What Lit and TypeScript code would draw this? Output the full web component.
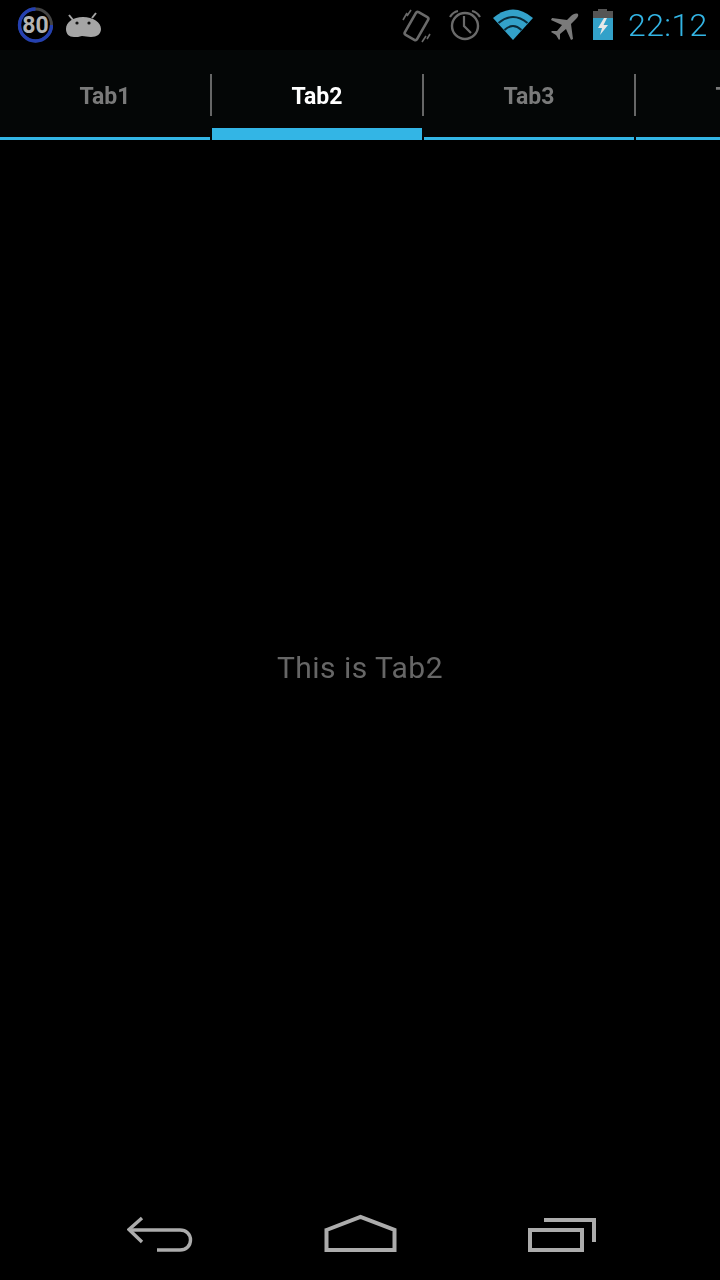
import { LitElement, html, css } from "lit";
import { customElement } from "lit/decorators.js";

const tabs = ["Tab1", "Tab2", "Tab3", "Tab4"];

@customElement("app-root")
export class AppRoot extends LitElement {
  static styles = css`
    :host { display: flex; flex-direction: column; width: 720px; height: 1280px; background: #000; font-family: Roboto, sans-serif; overflow: hidden; }
    .status { height: 50px; display: flex; align-items: flex-start; flex: none; }
    .status svg { display: block; flex: none; }
    .left { display: flex; padding: 7px 0 0 17px; gap: 12px; }
    .android { margin-top: 3px; }
    .right { margin-left: auto; display: flex; padding-top: 7px; }
    .vib { margin-top: 1px; }
    .alarm { margin-left: 13px; }
    .wifi { margin-left: 10px; }
    .plane { margin-left: 16px; }
    .battery { margin-left: 13px; }
    .time { color: #33b5e5; font-size: 32px; font-weight: 300; line-height: 36px; margin-left: 11px; margin-right: 12px; letter-spacing: 0.4px; will-change: transform; }
    .tabs { height: 90px; flex: none; background: #040606; display: flex; overflow: hidden; }
    .tab { flex: none; width: 210px; margin-right: 2px; position: relative; display: flex; flex-direction: column; }
    .label { flex: 1; display: flex; align-items: center; justify-content: center; font-size: 23px; font-weight: 700; color: #7a7a7a; padding-top: 6px; will-change: transform; }
    .active .label { color: #fff; margin-bottom: -9px; }
    .line { height: 3px; background: #33b5e5; flex: none; }
    .active .line { height: 12px; }
    .divider { position: absolute; right: -2px; top: 24px; width: 2px; height: 42px; background: #666; }
    .body { flex: 1; display: flex; align-items: center; justify-content: center; color: #666; font-size: 30px; padding-top: 10px; letter-spacing: 0.45px; will-change: transform; }
    .nav { height: 96px; flex: none; display: flex; align-items: flex-start; padding: 27px 124px 0 127px; box-sizing: border-box; justify-content: space-between; }
    .nav svg { display: block; }
  `;

  render() {
    return html`
      <div class="status">
        <div class="left">
          <svg width="36" height="36" viewBox="0 0 36 36" fill="none">
            <circle cx="18.5" cy="18" r="16" stroke="#444" stroke-width="3"></circle>
            <path d="M18.5 2 A16 16 0 1 0 34.5 18" stroke="#2440b0" stroke-width="3.4"></path>
            <text x="18.5" y="25.5" text-anchor="middle" font-family="Roboto" font-size="23" font-weight="700" fill="#b4b4b4">80</text>
          </svg>
          <svg class="android" width="37" height="28" viewBox="0 0 37 28">
            <path d="M4 5 L8 10 M31 3 L27 8" stroke="#a5a5a5" stroke-width="2"></path>
            <path d="M1 19 C1 12 8 7 18 7 C28 7 36 12 36 19 C36 24 32 27 26 27 C22 27 20 26 17 26 C14 27 12 27 9 27 C4 27 1 24 1 19 Z" fill="#a5a5a5"></path>
            <circle cx="12" cy="13" r="1.6" fill="#111"></circle>
            <circle cx="24" cy="13" r="1.6" fill="#111"></circle>
          </svg>
        </div>
        <div class="right">
          <svg class="vib" width="34" height="36" viewBox="0 0 34 36" fill="none" stroke="#6a6a6a">
            <rect x="8.5" y="5" width="14" height="26" rx="2" transform="rotate(30 15.5 18)" stroke-width="2.6"></rect>
            <path d="M6 5 L2 12 M10 2 L6 8 M25 28 L21 34 M29 26 L26 31" stroke-width="1.6"></path>
          </svg>
          <svg class="alarm" width="34" height="36" viewBox="0 0 34 36" fill="none" stroke="#6a6a6a">
            <circle cx="17" cy="19" r="13" stroke-width="2.4"></circle>
            <path d="M16 9 V19 L23 26" stroke-width="2.2"></path>
            <path d="M2 10 Q5 5 10 4 M24 4 Q29 5 32 10" stroke-width="2.2"></path>
          </svg>
          <svg class="wifi" width="42" height="36" viewBox="0 0 42 36">
            <path d="M1 11 Q21 -6 41 11 L21 33 Z" fill="#33a1c9"></path>
            <path d="M6.5 16 Q21 4 35.5 16 M12.5 23 Q21 15 29.5 23" fill="none" stroke="#0a2a38" stroke-width="2"></path>
          </svg>
          <svg class="plane" width="30" height="36" viewBox="0 0 30 36">
            <path d="M28 7 C26 6 23 7 21 9 L17 13 L2 11 L1 13 L12 18 L7 24 L2 24 L1 25 L6 28 L9 33 L10 32 L10 27 L16 22 L21 33 L23 32 L21 17 L25 13 C27 11 29 9 28 7 Z" fill="#7a7a7a"></path>
          </svg>
          <svg class="battery" width="24" height="36" viewBox="0 0 24 36">
            <path d="M5 2 H14 V4 H20 V11 H0 V4 H5 Z" fill="#555"></path>
            <rect x="0" y="11" width="20" height="22" fill="#33a1c9"></rect>
            <path d="M11 11 L5 21 H9 L7 28 L15 18 H10.5 L14 11 Z" fill="#e8e8e8"></path>
          </svg>
          <div class="time">22:12</div>
        </div>
      </div>
      <div class="tabs">
        ${tabs.map((t, i) => html`
          <div class="tab ${i === 1 ? "active" : ""}">
            <div class="label">${t}</div>
            <div class="line"></div>
            <div class="divider"></div>
          </div>`)}
      </div>
      <div class="body">This is Tab2</div>
      <div class="nav">
        <svg width="68" height="44" viewBox="0 0 68 44" fill="none" stroke="#acacac" stroke-width="3.4">
          <path d="M15 7 L2 18.5 L15 31"></path>
          <path d="M2 19 H53 C59 19 63.5 23 63.5 29 C63.5 35 59 39 53 39 H30"></path>
        </svg>
        <svg width="74" height="44" viewBox="0 0 74 44" fill="none" stroke="#acacac" stroke-width="4">
          <path d="M2.5 19 L36.5 6 L70.5 19 V39 H2.5 Z"></path>
        </svg>
        <svg width="70" height="44" viewBox="0 0 70 44" fill="none" stroke="#acacac" stroke-width="4">
          <rect x="4" y="19" width="52" height="20"></rect>
          <path d="M18 9 H68 V31"></path>
        </svg>
      </div>
    `;
  }
}
